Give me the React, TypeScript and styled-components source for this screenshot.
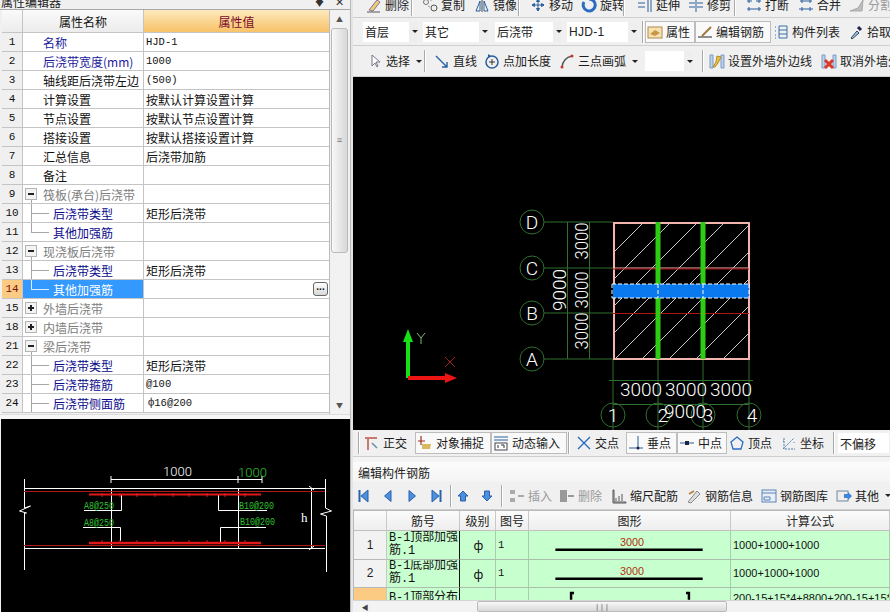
import React from 'react';
import styled, { createGlobalStyle, css } from 'styled-components';

const Global = createGlobalStyle`
  html, body { margin: 0; padding: 0; width: 890px; height: 612px; overflow: hidden; background: #f0f0f0; }
  * { box-sizing: border-box; }
  body { font-family: "Noto Sans CJK SC", "Liberation Sans", sans-serif; font-size: 12px; color: #111; }
`;

const Page = styled.div`display: flex; width: 890px; height: 612px; overflow: hidden;`;
const Left = styled.div`width: 350px; flex: none; display: flex; flex-direction: column; background: #f0f0f0;`;
const Splitter = styled.div`width: 3px; flex: none; background: #e4e4e4; border-left: 1px solid #bbb;`;
const Right = styled.div`flex: 1; min-width: 0; display: flex; flex-direction: column; overflow: hidden;`;

const PanelTitle = styled.div`
  height: 10px; flex: none; display: flex; align-items: flex-end; justify-content: space-between;
  padding: 0 6px 0 1px; overflow: hidden; font-size: 12px; line-height: 15px; color: #222; border-bottom: 1px solid #a8a8a8;
`;
const TitleMarks = styled.span`display: flex; gap: 10px; color: #333; font-size: 11px;`;
const PropFrame = styled.div`height: 404px; flex: none; display: flex; margin-left: 2px; width: 347px;`;
const PropGrid = styled.div`width: 328px; flex: none; border-right: 1px solid #bdbdbd;`;
const PropRow = styled.div<{ $h?: number }>`
  display: grid; grid-template-columns: 21px 121px 185px; height: ${p => p.$h ?? 19}px;
  border-bottom: 1px solid #c4c4c4;
`;
const HeadCell = styled.div<{ $active?: boolean }>`
  display: flex; align-items: center; justify-content: center; font-size: 12px; border-right: 1px solid #c4c4c4;
  ${p => p.$active
    ? css`background: linear-gradient(#fde9bd, #f8c268); color: #7a0a2a; border-right: none;`
    : css`background: linear-gradient(#fafafa, #ececec);`}
`;
const IndexCell = styled.div<{ $sel?: boolean }>`
  display: flex; align-items: center; justify-content: center; font-family: "Liberation Mono", monospace; font-size: 11px;
  border-right: 1px solid #c4c4c4;
  background: ${p => (p.$sel ? '#fbcb84' : '#f0f0f0')}; color: ${p => (p.$sel ? '#7a1010' : '#111')};
`;
type Tone = 'blue' | 'black' | 'gray' | 'navy';
const toneColor: Record<Tone, string> = { blue: '#1a1a9c', black: '#111', gray: '#7d7d7d', navy: '#0a0a8c' };
const NameCell = styled.div<{ $tone: Tone; $child?: boolean; $sel?: boolean; $branch?: 'mid' | 'last' | 'open' }>`
  position: relative; display: flex; align-items: center; white-space: nowrap; overflow: hidden;
  padding-left: ${p => (p.$child ? 30 : 20)}px; font-size: 12px; border-right: 1px solid #c4c4c4;
  color: ${p => (p.$sel ? '#fff' : toneColor[p.$tone])}; background: ${p => (p.$sel ? '#3399ff' : '#fff')};
  ${p => (p.$branch === 'mid' || p.$branch === 'last') && css`
    &::before { content: ''; position: absolute; left: 8px; top: 0; width: 1px; height: ${p.$branch === 'last' ? '50%' : '100%'}; background: ${p.$sel ? '#dfeeff' : '#a6a6a6'}; }
    &::after { content: ''; position: absolute; left: 8px; top: 50%; width: 18px; height: 1px; background: ${p.$sel ? '#dfeeff' : '#a6a6a6'}; }
  `}
  ${p => p.$branch === 'open' && css`
    &::before { content: ''; position: absolute; left: 8px; bottom: 0; width: 1px; height: 4px; background: #a6a6a6; }
  `}
`;
const Expander = styled.span<{ $plus?: boolean }>`
  position: absolute; left: 2px; top: 3px; width: 12px; height: 12px; border: 1px solid #b4b4b4; background: #f3f3f3;
  &::before { content: ''; position: absolute; left: 2px; top: 4px; width: 6px; height: 2px; background: #222; }
  ${p => p.$plus && css`&::after { content: ''; position: absolute; left: 4px; top: 2px; width: 2px; height: 6px; background: #222; }`}
`;
const ValueCell = styled.div<{ $mono?: boolean; $extra?: number }>`
  position: relative; display: flex; align-items: center; padding-left: ${p => 2 + (p.$extra ?? 0)}px; background: #fff; white-space: nowrap;
  font-size: ${p => (p.$mono ? '10.5px' : '12px')}; ${p => p.$mono && 'font-family: "Liberation Mono", "Noto Sans CJK SC", monospace;'}
  color: #111;
`;
const MoreButton = styled.span`
  position: absolute; right: 1px; top: 2px; width: 15px; height: 14px; border: 1px solid #666; border-radius: 3px;
  background: linear-gradient(#fff, #d8d8d8); font: bold 10px/7px "Liberation Sans", sans-serif; text-align: center; color: #111;
`;
const VScroll = styled.div`width: 17px; margin-left: 1px; flex: none; display: flex; flex-direction: column; background: #f2f2f2;`;
const ScrollArrow = styled.div`height: 18px; flex: none; display: flex; align-items: center; justify-content: center; color: #555; font-size: 7px;`;
const VThumb = styled.div`
  height: 225px; flex: none; display: flex; align-items: center; justify-content: center; border: 1px solid #bbb; border-radius: 3px;
  background: linear-gradient(90deg, #f8f8f8, #d7d7d7); color: #777; font: 9px/4px "Liberation Mono", monospace;
`;
const VTrack = styled.div`flex: 1;`;
const PreviewGap = styled.div`height: 5px; flex: none; border-top: 1px solid #dcdcdc; background: #f6f6f6;`;
const Preview = styled.div`flex: 1; margin-left: 1px; background: #000; min-height: 0;`;
const Drawing = styled.svg`display: block; width: 100%; height: 100%;`;

const ToolRow = styled.div<{ $h: number; $clip?: boolean }>`
  height: ${p => p.$h}px; flex: none; display: flex; overflow: hidden; white-space: nowrap;
  align-items: ${p => (p.$clip ? 'flex-end' : 'center')}; padding-bottom: ${p => (p.$clip ? 1 : 0)}px;
  background: #f0f0f0; border-bottom: 1px solid #cfcfcf;
`;
const Spacer = styled.div<{ $w: number }>`width: ${p => p.$w}px; flex: none;`;
const Sep = styled.div<{ $tall?: number }>`width: 2px; height: ${p => p.$tall ?? 22}px; flex: none; border-left: 1px solid #a9a9a9; border-right: 1px solid #fff;`;
const Tool = styled.div<{ $w: number; $on?: boolean; $off?: boolean }>`
  width: ${p => p.$w}px; height: 22px; flex: none; display: flex; align-items: center; gap: 3px; padding-left: 2px;
  font-size: 12px; line-height: 22px; color: ${p => (p.$off ? '#9a9a9a' : '#1c1c1c')};
  ${p => p.$on && css`background: #f9f9f9; border: 1px solid #bdbdbd; padding-left: 1px;`}
`;
const IconSvg = styled.svg`width: 16px; height: 16px; flex: none; display: block;`;
const Caret = styled.span`
  display: inline-block; width: 0; height: 0; border: 3px solid transparent; border-top: 3px solid #222; border-bottom: none; margin-left: 3px;
`;
const Combo = styled.div<{ $w: number }>`
  width: ${p => p.$w}px; height: 20px; flex: none; display: flex; align-items: center; justify-content: space-between; background: #fff;
  padding-left: 2px; font-size: 12px; color: #222;
`;
const ComboArrow = styled.span`width: 9px; height: 20px; background: #eee; display: flex; align-items: center; justify-content: center;`;
const ComboLatin = styled.span`font: 12px "Liberation Sans", sans-serif; letter-spacing: 0.3px;`;

const Canvas = styled.div`height: 353px; flex: none; background: #000; overflow: hidden;`;
const SnapGap = styled.div`height: 5px; flex: none; background: #f4f4f4;`;
const StripTitle = styled.div`height: 20px; flex: none; display: flex; align-items: center; padding-left: 5px; font-size: 12px; color: #222; background: linear-gradient(#fcfcfc, #f4f4f4);`;
const BarsTable = styled.div`height: 90px; flex: none; overflow: hidden; background: #fff; border-top: 1px solid #b9b9b9; border-left: 1px solid #b9b9b9;`;
const BarRow = styled.div<{ $h: number }>`
  display: grid; grid-template-columns: 33px 73px 36px 33px 202px 1fr; height: ${p => p.$h}px; flex: none;
`;
const BarHead = styled.div`
  display: flex; align-items: center; justify-content: center; font-size: 12px; color: #222; background: linear-gradient(#fbfbfb, #eee);
  border-right: 1px solid #c8c8c8; border-bottom: 1px solid #c0c0c0;
`;
const BarIdx = styled.div<{ $sel?: boolean }>`
  display: flex; align-items: center; justify-content: center; font: 12px "Liberation Sans", sans-serif; color: #222;
  background: ${p => (p.$sel ? '#fbcb84' : '#f2f2f2')}; border-right: 1px solid #c8c8c8; border-bottom: 1px solid #b8b8b8;
`;
const BarCell = styled.div<{ $dark?: boolean; $center?: boolean; $top?: boolean }>`
  display: flex; align-items: ${p => (p.$top ? 'flex-start' : 'center')}; justify-content: ${p => (p.$center ? 'center' : 'flex-start')};
  background: #c8ffcf; border-right: 1px solid ${p => (p.$dark ? '#111' : '#a9cbae')}; border-bottom: 1px solid #a9bfac;
  padding: 0 0 0 2px; color: #111; overflow: hidden; min-width: 0;
`;
const BarName = styled.div<{ $clip?: boolean }>`
  font: 12px/13px "Liberation Mono", "Noto Sans CJK SC", monospace; width: 71px; flex: none; letter-spacing: -0.1px;
  ${p => p.$clip && 'margin-top: 4px;'}
`;
const BarNum = styled.span`font: 10.5px "Liberation Mono", monospace;`;
const Formula = styled.span<{ $clip?: boolean }>`font: 11px "Liberation Sans", sans-serif; white-space: nowrap; ${p => p.$clip && 'margin-top: 4px;'}`;
const HScroll = styled.div`height: 12px; flex: none; display: flex; align-items: center; background: #f3f3f3; border-top: 1px solid #d4d4d4;`;
const HArrow = styled.div`width: 24px; flex: none; text-align: center; font-size: 7px; color: #444;`;
const HThumb = styled.div`
  width: 250px; height: 11px; flex: none; border: 1px solid #bbb; border-radius: 2px; background: linear-gradient(#f8f8f8, #d8d8d8);
  text-align: center; font: 8px/9px "Liberation Mono", monospace; color: #666;
`;

const CadText = styled.text<{ $c?: string; $s?: number }>`
  fill: ${p => p.$c ?? '#fff'}; font-family: "Roboto", "Liberation Sans", sans-serif; font-weight: 300; font-size: ${p => p.$s ?? 18}px;
`;
const SmallCad = styled.text<{ $c?: string }>`
  fill: ${p => p.$c ?? '#2fc02f'}; font-family: "Liberation Mono", monospace; font-size: 11px;
`;
const HeightMark = styled.text`fill: #fff; font-family: "Liberation Serif", serif; font-size: 13px;`;
const ShapeLabel = styled.text`fill: #b03010; font-family: "Liberation Sans", sans-serif; font-size: 11px;`;

const b = '#2c5f9e';
const nf = '#4a8fe0';
const ns = '#2a60a8';
const ICONS: Record<string, React.ReactNode> = {
  erase: <><path d="M3 13L11 3l3 2-7 9z" fill="#e8d070" stroke="#8a70a0" /><path d="M1 15h13" stroke="#555" /></>,
  copy: <><circle cx="4" cy="5" r="2.5" fill="none" stroke="#777" /><circle cx="12" cy="11" r="3" fill="none" stroke="#555" /><path d="M8 3h2M6 9l2 1" stroke="#999" /></>,
  mirror: <><path d="M8 1v14" stroke="#444" /><path d="M6 4L2 14h4z" fill="none" stroke={b} /><path d="M10 4l4 10h-4z" fill="none" stroke={b} /></>,
  move: <path d="M8 2v12M2 8h12M8 2L6.5 4.5h3zM8 14l-1.5-2.5h3zM2 8l2.5-1.5v3zM14 8l-2.5-1.5v3z" fill={b} stroke={b} />,
  rotate: <path d="M8 2a6 6 0 1 1-5 3" fill="none" stroke="#2a6cc0" strokeWidth="3" />,
  extend: <path d="M1 6h7M1 10h7M11 2v13M14 2v13" stroke={b} fill="none" />,
  trim: <path d="M1 6h6M1 10h6M9 6h6M9 10h6M8 2v13" stroke={b} fill="none" />,
  cut: <path d="M1 4h5M10 4h5M1 12h14M3 2v4M13 2v4M3 10v4M13 10v4" stroke={b} fill="none" />,
  merge: <path d="M2 4h12M1 12h14M4 2v4M12 2v4M4 10v4M12 10v4" stroke={b} fill="none" />,
  split: <path d="M1 14l8-3 5-8-1 11z" fill="#bdbdbd" stroke="#aaa" />,
  props: <><rect x="1" y="3" width="14" height="11" fill="#f7e3b0" stroke="#b08a50" /><path d="M3 10l5-4 5 3-5 3z" fill="#c89848" /></>,
  rebar: <><path d="M1 13h14" stroke="#222" /><path d="M5 12L14 3" stroke="#a07a40" strokeWidth="2" /></>,
  list: <path d="M2 3h1M2 7h1M2 11h1M2 14h1M6 2h8v12H6zM6 6h8M6 10h8" stroke="#3a6ea5" fill="none" />,
  pick: <><path d="M3 14l6-7 2 2-7 6z" fill="#9cc4ee" stroke="#345" /><path d="M10 3l3 3" stroke="#225" strokeWidth="3" /></>,
  cursor: <path d="M5 2v11l3-3 2 4 1-1-2-4h4z" fill="#fff" stroke="#778" />,
  line: <path d="M2 3l11 11M13 9v5H8" fill="none" stroke="#2a5f9e" strokeWidth="1.4" />,
  ptlen: <><circle cx="8" cy="9" r="6" fill="none" stroke="#2a5f9e" strokeWidth="1.5" /><path d="M8 6v6M5 9h6" stroke="#333" /><path d="M4 1l3 2-3 2z" fill="#2a5f9e" /></>,
  arc: <><path d="M3 14Q4 5 13 3" fill="none" stroke="#555" strokeWidth="1.3" /><circle cx="3" cy="14" r="1.5" fill="#c33" /><circle cx="13" cy="3" r="1.5" fill="#c33" /></>,
  wallset: <><path d="M1 2h3v13H1zM12 2h3v13h-3z" fill="#bcd0ea" stroke="#7a9cc8" /><path d="M4 14l3-5 1-6 4 1-3 6-3 4z" fill="#ecc444" stroke="#b08a20" /></>,
  wallno: <><path d="M1 2h3v13H1zM12 2h3v13h-3z" fill="#bcd0ea" stroke="#7a9cc8" /><path d="M4 7l8 8M12 7l-8 8" stroke="#d83a2a" strokeWidth="3" /></>,
  ortho: <><path d="M1 3h12M4 3v12" stroke="#c87a70" strokeWidth="2" /><path d="M8 8l5 5" stroke="#6a8aa8" strokeWidth="1.5" /></>,
  snap: <><path d="M4 1v9M1 6h7" stroke="#a03020" strokeWidth="1.2" /><path d="M5 9h9l-1 5H5z" fill="#d8b860" /></>,
  dyn: <><path d="M1 2h14M1 5h14" stroke="#2a5f9e" /><rect x="2" y="8" width="12" height="7" fill="#fff" stroke="#445" /><path d="M5 10v3M8 10h3v3" stroke="#333" fill="none" /></>,
  cross: <path d="M2 2l12 12M14 2L2 14" stroke="#2a6cc0" strokeWidth="1.4" />,
  perp: <><path d="M1 13h14M10 1v12" stroke="#2a5f9e" /><circle cx="10" cy="13" r="1.5" fill="#224" /></>,
  mid: <><path d="M1 8h14" stroke="#2a5f9e" /><rect x="6" y="6" width="4" height="4" fill="#224" /></>,
  vertex: <path d="M8 2l6 5-2 7H4L2 7z" fill="none" stroke="#2a6cc0" strokeWidth="1.3" />,
  coord: <path d="M2 14l5-5 6-6M3 3v11h11M2 6h1M13 7v1" stroke="#4a7ab0" fill="none" strokeDasharray="2 1" />,
  first: <><path d="M3.5 2v12" stroke={ns} strokeWidth="2" /><path d="M12 2v12L5 8z" fill={nf} stroke={ns} /></>,
  prev: <path d="M11 2.5v11L4.5 8z" fill={nf} stroke={ns} />,
  next: <path d="M5 2.5v11L11.5 8z" fill={nf} stroke={ns} />,
  last: <><path d="M12.5 2v12" stroke={ns} strokeWidth="2" /><path d="M4 2v12l7-6z" fill={nf} stroke={ns} /></>,
  up: <path d="M8 3l5 5h-2.5v5h-5V8H3z" fill={nf} stroke={ns} />,
  down: <path d="M8 13l5-5h-2.5V3h-5v5H3z" fill={nf} stroke={ns} />,
  ins: <path d="M1 2h5v4H1zM1 10h5v4H1zM9 7h6v2H9z" fill="#aaa" />,
  del: <path d="M1 2h7v12H1zM9 7h6v2H9z" fill="#999" />,
  scale: <path d="M2 2h1v12h12v1H2zM5 10v3M8 8v5M11 6v7" stroke="#555" fill="none" />,
  info: <><path d="M2 14L11 3l3 3-9 9z" fill="#ddd" stroke="#888" /><path d="M3 6l5-3" stroke="#c08040" strokeWidth="2" /></>,
  lib: <><rect x="1" y="2" width="14" height="12" fill="#e8eef8" stroke="#5a82b4" /><path d="M1 5h14M3 9h6v3H3z" stroke="#5a82b4" fill="none" /></>,
  other: <><rect x="1" y="3" width="11" height="10" fill="#eee" stroke="#789" /><path d="M8 6h4V4l4 4-4 4v-2H8z" fill="#3f86d8" /></>,
};
const Ico = ({ n }: { n: string }) => <IconSvg viewBox="0 0 16 16">{ICONS[n]}</IconSvg>;

type P = { n: string; name: string; tone?: Tone; child?: boolean; branch?: 'mid' | 'last' | 'open'; group?: 'open' | 'closed'; value?: string; mono?: boolean; extra?: number; sel?: boolean };
const rows: P[] = [
  { n: '1', name: '名称', tone: 'blue', value: 'HJD-1', mono: true },
  { n: '2', name: '后浇带宽度(mm)', tone: 'blue', value: '1000', mono: true },
  { n: '3', name: '轴线距后浇带左边', value: '(500)', mono: true },
  { n: '4', name: '计算设置', value: '按默认计算设置计算' },
  { n: '5', name: '节点设置', value: '按默认节点设置计算' },
  { n: '6', name: '搭接设置', value: '按默认搭接设置计算' },
  { n: '7', name: '汇总信息', value: '后浇带加筋' },
  { n: '8', name: '备注' },
  { n: '9', name: '筏板(承台)后浇带', tone: 'gray', group: 'open', branch: 'open' },
  { n: '10', name: '后浇带类型', tone: 'navy', child: true, branch: 'mid', value: '矩形后浇带' },
  { n: '11', name: '其他加强筋', tone: 'navy', child: true, branch: 'last' },
  { n: '12', name: '现浇板后浇带', tone: 'gray', group: 'open', branch: 'open' },
  { n: '13', name: '后浇带类型', tone: 'navy', child: true, branch: 'mid', value: '矩形后浇带' },
  { n: '14', name: '其他加强筋', tone: 'navy', child: true, branch: 'last', sel: true },
  { n: '15', name: '外墙后浇带', tone: 'gray', group: 'closed' },
  { n: '18', name: '内墙后浇带', tone: 'gray', group: 'closed' },
  { n: '21', name: '梁后浇带', tone: 'gray', group: 'open', branch: 'open' },
  { n: '22', name: '后浇带类型', tone: 'navy', child: true, branch: 'mid', value: '矩形后浇带' },
  { n: '23', name: '后浇带箍筋', tone: 'navy', child: true, branch: 'mid', value: '@100', mono: true },
  { n: '24', name: '后浇带侧面筋', tone: 'navy', child: true, branch: 'mid', value: 'ф16@200', mono: true, extra: 2 },
];

const range = (n: number) => Array.from({ length: n }, (_, i) => i);

const BeamDetail = () => {
  const W = '#fff';
  const dots = [102, 120, 137, 155, 173, 189, 207, 225, 245];
  return (
    <Drawing viewBox="1 419 349 193">
      <g stroke={W} fill="none">
        <path d="M24 488.5H325M24 548.5H325" />
        <path d="M24.5 479V508l6-2-11 5 7 2-2 0V570M325.5 479V508l6 3-11 3 6 2V572" />
        <path d="M111.5 488V548M238.5 488V548M111 479.5H262M111 476v7M238 476v7M262 476v7" />
        <path d="M311.5 488V548M309 486l5 4M309 550l5-4" />
        <path d="M84 510.5H121.5V495M83 527.5H120.5V541M267 510.5H218.5V494M266 527.5H220.5V543" />
      </g>
      <g stroke="#e01818" fill="none">
        <path d="M24 491.5H325M24 545.5H325" stroke="#b01818" />
        <path d="M89 494.5H261" strokeWidth="2" />
        <path d="M89 543H261" strokeWidth="2.5" />
        {dots.map(x => <path key={x} d={`M${x} 493V497M${x} 540V544`} />)}
      </g>
      <CadText x="163" y="476" $s={13}>1000</CadText>
      <CadText x="238" y="477" $c="#2fc02f" $s={13}>1000</CadText>
      <SmallCad x="84" y="509" textLength={30} lengthAdjust="spacingAndGlyphs">A8@250</SmallCad>
      <SmallCad x="84" y="526" textLength={30} lengthAdjust="spacingAndGlyphs">A8@250</SmallCad>
      <SmallCad x="239" y="509" textLength={35} lengthAdjust="spacingAndGlyphs">B10@200</SmallCad>
      <SmallCad x="240" y="525" textLength={35} lengthAdjust="spacingAndGlyphs">B10@200</SmallCad>
      <HeightMark x="301" y="522">h</HeightMark>
    </Drawing>
  );
};

const Plan = () => {
  const dg = '#2f6f2f';
  const xs = [613, 658, 703, 749];
  const ys = [['D', 222], ['C', 268], ['B', 313], ['A', 359]] as [string, number][];
  return (
    <Drawing viewBox="353 77 537 353">
      <defs>
        <clipPath id="plan"><rect x="613" y="222" width="136" height="137" /></clipPath>
      </defs>
      <g clipPath="url(#plan)" stroke="#c8c8c8">
        {range(11).map(k => <line key={k} x1={480 + k * 27} y1={359} x2={617 + k * 27} y2={222} />)}
      </g>
      <g stroke={dg} fill="none">
        {ys.map(([l, y]) => (
          <g key={l}>
            <circle cx="532" cy={y} r="12" />
            <line x1="544" y1={y} x2="613" y2={y} />
          </g>
        ))}
        {xs.map(x => (
          <g key={x}>
            <circle cx={x} cy="415" r="12" />
            <line x1={x} y1="359" x2={x} y2="430" />
          </g>
        ))}
        <path d="M567.5 222V359M589.5 222V359M609 380.5H753M613 404.5H749" />
      </g>
      <rect x="614" y="223" width="135" height="136" fill="none" stroke="#f2b4ac" strokeWidth="2" />
      <path d="M613 268H749" stroke="#f2b4ac" />
      <path d="M613 269H749M613 313.5H749" stroke="#b01414" />
      <path d="M658 222V359M703 222V359" stroke="#2ecc14" strokeWidth="5" />
      <rect x="613" y="284" width="136" height="14" fill="#0a78ee" />
      <path d="M612 284H750M612 298H750M612 284V298M658 284V298M703 284V298M749 284V298" stroke="#fff" strokeDasharray="4 2" fill="none" />
      {ys.map(([l, y]) => (
        <CadText key={l} x="532" y={y + 7} textAnchor="middle" $s={19}>{l}</CadText>
      ))}
      {([['1', 613], ['2', 663], ['3', 708], ['4', 752]] as [string, number][]).map(([l, x]) => (
        <CadText key={l} x={x} y="422" textAnchor="middle" $s={19}>{l}</CadText>
      ))}
      {[241, 290, 331].map(y => (
        <CadText key={y} transform={`translate(588 ${y}) rotate(-90)`} textAnchor="middle" $s={19} textLength={37} lengthAdjust="spacingAndGlyphs">3000</CadText>
      ))}
      <CadText transform="translate(566 290) rotate(-90)" textAnchor="middle" $s={19}>9000</CadText>
      {[641, 686, 731].map(x => <CadText key={x} x={x} y="396" textAnchor="middle" $s={19}>3000</CadText>)}
      <CadText x="685" y="418" textAnchor="middle" $s={19}>9000</CadText>
      <path d="M406 378V342h-3l5-13 5 13h-3v36z" fill="#18e018" />
      <path d="M408 376h37v-3l12 5-12 5v-3h-37z" fill="#ee1414" />
      <path d="M417 333l4 5 4-5M421 338v6" stroke="#7fb37f" fill="none" />
      <path d="M445 357l10 10M455 357l-10 10" stroke="#a02020" fill="none" />
    </Drawing>
  );
};

const Shape = ({ y, label }: { y: number; label: string }) => (
  <Drawing viewBox="0 0 201 28">
    <ShapeLabel x="102" y={y - 4} textAnchor="middle">{label}</ShapeLabel>
    <path d={`M24 ${y}H174`} stroke="#000" strokeWidth="2.5" />
  </Drawing>
);

export default function App() {
  return (
    <Page>
      <Global />
      <Left>
        <PanelTitle>
          <span>属性编辑器</span>
          <TitleMarks><span>♦</span><span>✕</span></TitleMarks>
        </PanelTitle>
        <PropFrame>
          <PropGrid>
            <PropRow $h={23}>
              <HeadCell />
              <HeadCell>属性名称</HeadCell>
              <HeadCell $active>属性值</HeadCell>
            </PropRow>
            {rows.map(r => (
              <PropRow key={r.n}>
                <IndexCell $sel={r.sel}>{r.n}</IndexCell>
                <NameCell $tone={r.tone ?? 'black'} $child={r.child} $sel={r.sel} $branch={r.branch}>
                  {r.group && <Expander $plus={r.group === 'closed'} />}
                  {r.name}
                </NameCell>
                <ValueCell $mono={r.mono} $extra={r.extra}>
                  {r.value}
                  {r.sel && <MoreButton>...</MoreButton>}
                </ValueCell>
              </PropRow>
            ))}
          </PropGrid>
          <VScroll>
            <ScrollArrow>▲</ScrollArrow>
            <VThumb>≡</VThumb>
            <VTrack />
            <ScrollArrow>▼</ScrollArrow>
          </VScroll>
        </PropFrame>
        <PreviewGap />
        <Preview><BeamDetail /></Preview>
      </Left>
      <Splitter />
      <Right>
        <ToolRow $h={18} $clip>
          <Spacer $w={11} />
          <Tool $w={47}><Ico n="erase" />删除</Tool><Sep /><Spacer $w={7} />
          <Tool $w={52}><Ico n="copy" />复制</Tool>
          <Tool $w={46}><Ico n="mirror" />镜像</Tool><Sep /><Spacer $w={8} />
          <Tool $w={51}><Ico n="move" />移动</Tool>
          <Tool $w={44}><Ico n="rotate" />旋转</Tool><Sep /><Spacer $w={10} />
          <Tool $w={51}><Ico n="extend" />延伸</Tool>
          <Tool $w={48}><Ico n="trim" />修剪</Tool><Sep /><Spacer $w={8} />
          <Tool $w={52}><Ico n="cut" />打断</Tool>
          <Tool $w={51}><Ico n="merge" />合并</Tool>
          <Tool $w={50} $off><Ico n="split" />分割</Tool>
        </ToolRow>
        <ToolRow $h={28}>
          <Spacer $w={10} />
          <Combo $w={55}>首层<ComboArrow><Caret /></ComboArrow></Combo><Spacer $w={5} />
          <Combo $w={65}>其它<ComboArrow><Caret /></ComboArrow></Combo><Spacer $w={7} />
          <Combo $w={67}>后浇带<ComboArrow><Caret /></ComboArrow></Combo><Spacer $w={5} />
          <Combo $w={70}><ComboLatin>HJD-1</ComboLatin><ComboArrow><Caret /></ComboArrow></Combo><Spacer $w={5} />
          <Sep /><Spacer $w={1} />
          <Tool $w={50} $on><Ico n="props" />属性</Tool>
          <Tool $w={76} $on><Ico n="rebar" />编辑钢筋</Tool>
          <Tool $w={75}><Ico n="list" />构件列表</Tool>
          <Tool $w={46}><Ico n="pick" />拾取</Tool>
        </ToolRow>
        <ToolRow $h={31}>
          <Spacer $w={12} />
          <Tool $w={59}><Ico n="cursor" />选择<Caret /></Tool><Sep /><Spacer $w={6} />
          <Tool $w={50}><Ico n="line" />直线</Tool>
          <Tool $w={75}><Ico n="ptlen" />点加长度</Tool>
          <Tool $w={88}><Ico n="arc" />三点画弧<Caret /></Tool>
          <Combo $w={48}><span /><ComboArrow><Caret /></ComboArrow></Combo><Spacer $w={9} />
          <Sep /><Spacer $w={3} />
          <Tool $w={112}><Ico n="wallset" />设置外墙外边线</Tool>
          <Tool $w={90}><Ico n="wallno" />取消外墙外边线</Tool>
        </ToolRow>
        <Canvas><Plan /></Canvas>
        <ToolRow $h={27}>
          <Spacer $w={5} />
          <Sep /><Spacer $w={2} />
          <Tool $w={53}><Ico n="ortho" />正交</Tool>
          <Tool $w={76} $on><Ico n="snap" />对象捕捉</Tool>
          <Tool $w={76} $on><Ico n="dyn" />动态输入</Tool>
          <Spacer $w={1} /><Sep /><Spacer $w={4} />
          <Tool $w={52}><Ico n="cross" />交点</Tool>
          <Tool $w={51} $on><Ico n="perp" />垂点</Tool>
          <Tool $w={50} $on><Ico n="mid" />中点</Tool>
          <Tool $w={52}><Ico n="vertex" />顶点</Tool>
          <Tool $w={54}><Ico n="coord" />坐标</Tool>
          <Sep /><Spacer $w={3} />
          <Combo $w={60}>不偏移<ComboArrow><Caret /></ComboArrow></Combo>
        </ToolRow>
        <SnapGap />
        <StripTitle>编辑构件钢筋</StripTitle>
        <ToolRow $h={28}>
          <Spacer $w={1} />
          <Tool $w={24}><Ico n="first" /></Tool>
          <Tool $w={24}><Ico n="prev" /></Tool>
          <Tool $w={24}><Ico n="next" /></Tool>
          <Tool $w={24}><Ico n="last" /></Tool>
          <Sep /><Spacer $w={1} />
          <Tool $w={24}><Ico n="up" /></Tool>
          <Tool $w={24}><Ico n="down" /></Tool>
          <Sep /><Spacer $w={4} />
          <Tool $w={50} $off><Ico n="ins" />插入</Tool>
          <Tool $w={52} $off><Ico n="del" />删除</Tool>
          <Tool $w={75}><Ico n="scale" />缩尺配筋</Tool>
          <Tool $w={75}><Ico n="info" />钢筋信息</Tool>
          <Tool $w={75}><Ico n="lib" />钢筋图库</Tool>
          <Tool $w={60}><Ico n="other" />其他<Caret /></Tool>
        </ToolRow>
        <BarsTable>
          <BarRow $h={20}>
            <BarHead /><BarHead>筋号</BarHead><BarHead>级别</BarHead><BarHead>图号</BarHead><BarHead>图形</BarHead><BarHead>计算公式</BarHead>
          </BarRow>
          <BarRow $h={28.5}>
            <BarIdx>1</BarIdx>
            <BarCell $dark><BarName>B-1顶部加强筋.1</BarName></BarCell>
            <BarCell $center>ф</BarCell>
            <BarCell><BarNum>1</BarNum></BarCell>
            <BarCell><Shape y={19} label="3000" /></BarCell>
            <BarCell><Formula>1000+1000+1000</Formula></BarCell>
          </BarRow>
          <BarRow $h={28.5}>
            <BarIdx>2</BarIdx>
            <BarCell $dark><BarName>B-1底部加强筋.1</BarName></BarCell>
            <BarCell $center>ф</BarCell>
            <BarCell><BarNum>1</BarNum></BarCell>
            <BarCell><Shape y={19} label="3000" /></BarCell>
            <BarCell><Formula>1000+1000+1000</Formula></BarCell>
          </BarRow>
          <BarRow $h={28.5}>
            <BarIdx $sel />
            <BarCell $dark $top><BarName $clip>B-1顶部分布筋.1</BarName></BarCell>
            <BarCell />
            <BarCell />
            <BarCell $top>
              <Drawing viewBox="0 0 201 28">
                <path d="M40 12V5h3M160 12V5h-3" stroke="#000" strokeWidth="2.5" fill="none" />
              </Drawing>
            </BarCell>
            <BarCell $top><Formula $clip>200-15+15*4+8800+200-15+15*4</Formula></BarCell>
          </BarRow>
        </BarsTable>
        <HScroll>
          <HArrow>◀</HArrow>
          <Spacer $w={100} />
          <HThumb>|||</HThumb>
        </HScroll>
      </Right>
    </Page>
  );
}
